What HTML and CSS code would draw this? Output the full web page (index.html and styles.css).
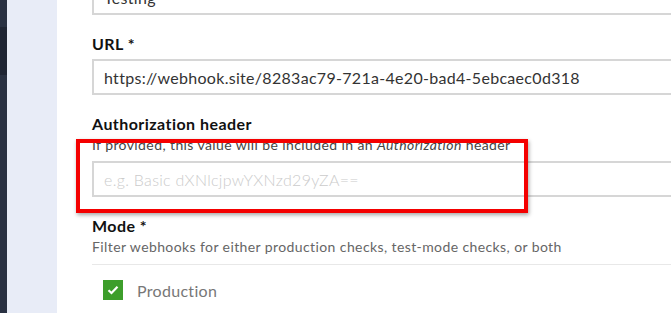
FILE: index.html
```html
<!DOCTYPE html>
<html>
<head>
  <title>Webhook</title>
  <link rel="stylesheet" href="styles.css">
</head>
<body>
  <div class="layout">
    <div class="nav-rail">
      <div class="nav-rail_active"></div>
    </div>
    <div class="side-panel"></div>
    <main class="content">
      <form class="hook-form">
        <div class="form-group">
          <input class="form-input" type="text" value="Testing">
        </div>

        <div class="form-group">
          <label class="form-label">URL *</label>
          <input class="form-input" type="text" value="https://webhook.site/8283ac79-721a-4e20-bad4-5ebcaec0d318">
        </div>

        <div class="form-group form-group--marked">
          <label class="form-label">Authorization header</label>
          <div class="form-help">If provided, this value will be included in an <em>Authorization</em> header</div>
          <input class="form-input" type="text" placeholder="e.g. Basic dXNlcjpwYXNzd29yZA==">
          <div class="annotation"></div>
        </div>

        <div class="form-group">
          <label class="form-label">Mode *</label>
          <div class="form-help form-help--muted">Filter webhooks for either production checks, test-mode checks, or both</div>
          <div class="option-list">
            <label class="option">
              <span class="option_box">
                <svg width="12" height="10" viewBox="0 0 12 10"><path d="M1.5 5.2 4.5 8 10.5 1.8" fill="none" stroke="#fff" stroke-width="2.2"/></svg>
              </span>
              <span class="option_text">Production</span>
            </label>
          </div>
        </div>
      </form>
    </main>
  </div>
</body>
</html>
```

FILE: styles.css
```css
/* общие */
html, body {
    margin: 0;
    height: 100%;
    overflow: hidden;
    background: #fff;
}

body {
    font-family: 'Lato', 'Open Sans', sans-serif;
    color: #222;
}

.layout {
    display: flex;
    height: 313px;
}

/* левая панель */
.nav-rail {
    width: 7px;
    flex-shrink: 0;
    background: #293142;
    padding-top: 27px;
    box-sizing: border-box;
}

.nav-rail_active {
    height: 48px;
    background: #1f2533;
}

.side-panel {
    width: 50px;
    flex-shrink: 0;
    background: #e8ecf7;
}

/* форма */
.content {
    flex: 1;
    overflow: hidden;
    padding-left: 35px;
}

.hook-form {
    width: 640px;
    margin-top: -21px;
}

.form-group {
    margin-bottom: 17px;
}

.form-group--marked {
    position: relative;
}

.form-label {
    display: block;
    font-weight: 700;
    font-size: 16px;
    line-height: 24px;
    letter-spacing: 0.45px;
    color: #111;
    margin-bottom: 3px;
}

.form-help {
    font-size: 14px;
    line-height: 20px;
    letter-spacing: 0.4px;
    color: #444;
    margin-top: -4px;
    margin-bottom: 6px;
}

.form-help--muted {
    color: #666;
    margin-bottom: 7px;
}

.form-input {
    display: block;
    width: 100%;
    box-sizing: border-box;
    height: 36px;
    border: 2px solid #d6d6d6;
    border-radius: 0;
    padding: 0 10px;
    font-family: inherit;
    font-size: 16px;
    letter-spacing: 0.3px;
    color: #333;
    outline: none;
}

.form-input::placeholder {
    color: #cbcbcb;
    font-weight: 300;
}

/* красная рамка поверх */
.annotation {
    position: absolute;
    left: -16px;
    top: 27px;
    width: 444px;
    height: 66px;
    border: 4px solid #f40000;
    box-shadow: 1px 2px 4px rgba(0, 0, 0, 0.35);
    pointer-events: none;
}

.option-list {
    border-top: 1px solid #e8e8e8;
    padding: 15px 11px;
}

.option {
    display: flex;
    align-items: center;
    gap: 14px;
}

.option_box {
    width: 20px;
    height: 20px;
    background: #3d9e2b;
    display: flex;
    align-items: center;
    justify-content: center;
}

.option_text {
    font-size: 16px;
    letter-spacing: 0.3px;
    color: #777;
}
```
